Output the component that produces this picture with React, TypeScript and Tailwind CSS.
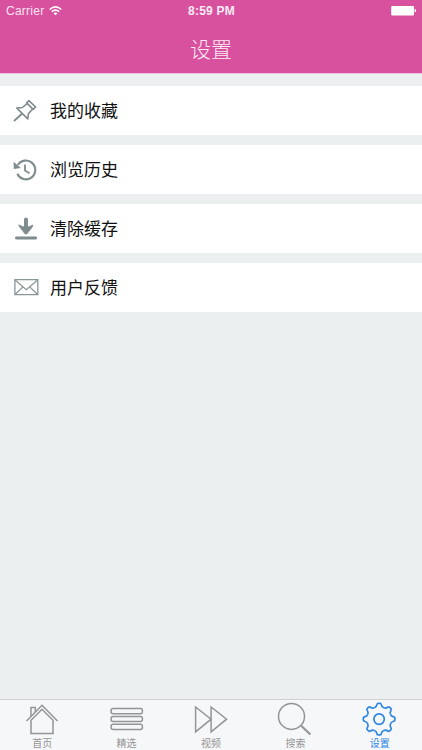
import type { ReactNode } from "react";

const TOOTH = "M-4.7 -11.4 C-3.1 -12.1 -2.6 -12.8 -2.4 -14 Q-2.1 -15.8 -1 -15.8 H1 Q2.1 -15.8 2.4 -14 C2.6 -12.8 3.1 -12.1 4.7 -11.4";

function PinIcon() {
  return (
    <svg width="26" height="26" viewBox="0 0 26 26" fill="none" stroke="#7f8c8d" strokeWidth="1.6" strokeLinejoin="round">
      <path d="M14.6 4.9 L16.9 2.6 L23.6 9 L21.2 11.4 Z" />
      <path d="M15.2 5.6 L10.4 9.5 L4.8 10.1 L15.8 20.9 L16.4 15.8 L20.6 11" />
      <path d="M10 15.7 L2 23" strokeWidth="1.9" />
    </svg>
  );
}

function HistoryIcon() {
  return (
    <svg width="26" height="26" viewBox="0 0 26 26" fill="none" stroke="#7f8c8d" strokeWidth="2.1">
      <path d="M5.9 8 A9.4 9.4 0 1 1 5.3 16.8" />
      <path d="M1.6 4.8 L1.8 11.9 L8.8 11 Z" fill="#7f8c8d" stroke="none" />
      <path d="M13 7.4 V13.4 L17.6 16.2" strokeWidth="1.8" />
    </svg>
  );
}

function DownloadIcon() {
  return (
    <svg width="26" height="26" viewBox="0 0 26 26" fill="none" stroke="#7f8c8d" strokeLinecap="round">
      <path d="M14 3.4 V14" strokeWidth="4" />
      <path d="M7.2 9 L11 10.8 H17 L20.8 9 L20.6 10.6 L14.8 18 H13.2 L7.4 10.6 Z" fill="#7f8c8d" strokeWidth="0.8" strokeLinejoin="round" />
      <path d="M4.4 22 H23.7" strokeWidth="2.8" />
    </svg>
  );
}

function MailIcon() {
  return (
    <svg width="27" height="26" viewBox="0 0 27 26" fill="none" stroke="#8b9697" strokeWidth="1.3">
      <path d="M2.9 4.7 H25.8 V19.7 H2.9 Z" />
      <path d="M3.1 4.9 L14.3 14.7 L25.6 4.9 M3.1 19.5 L10.9 11.9 M25.6 19.5 L17.7 11.9" />
    </svg>
  );
}

function HomeIcon() {
  return (
    <>
      <path d="M2.5 19 L18 3.2 L33.5 19" />
      <path d="M7 18.3 L18 7.2 L29 18.3 V31.4 H7 Z" />
      <path d="M7 14.4 V5.5 H11.3 V10" />
    </>
  );
}

function ListIcon() {
  return (
    <>
      <rect x="2.1" y="6.5" width="31.3" height="5.2" rx="2" />
      <rect x="2.1" y="14.4" width="31.3" height="5.2" rx="2" />
      <rect x="2.1" y="22.3" width="31.3" height="5.2" rx="2" />
    </>
  );
}

function ForwardIcon() {
  return <path d="M2.6 5 V29.8 L18.1 17.2 Z M18.1 5 V29.8 L33.6 17.2 Z" />;
}

function SearchIcon() {
  return (
    <>
      <circle cx="14.5" cy="14.4" r="13" />
      <path d="M24.2 23.8 L33.4 32.5" strokeWidth="2.2" />
    </>
  );
}

function GearIcon() {
  return (
    <g transform="translate(17.1 17.1)" strokeWidth="1.7">
      {[0, 45, 90, 135, 180, 225, 270, 315].map((angle) => (
        <path key={angle} d={TOOTH} transform={`rotate(${angle})`} />
      ))}
      <circle r="5.2" />
    </g>
  );
}

const rows: { label: string; icon: ReactNode }[] = [
  { label: "我的收藏", icon: <PinIcon /> },
  { label: "浏览历史", icon: <HistoryIcon /> },
  { label: "清除缓存", icon: <DownloadIcon /> },
  { label: "用户反馈", icon: <MailIcon /> },
];

const tabs: { label: string; icon: ReactNode; active?: boolean }[] = [
  { label: "首页", icon: <HomeIcon /> },
  { label: "精选", icon: <ListIcon /> },
  { label: "视频", icon: <ForwardIcon /> },
  { label: "搜索", icon: <SearchIcon /> },
  { label: "设置", icon: <GearIcon />, active: true },
];

function StatusBar() {
  return (
    <div className="grid h-[22px] grid-cols-3 items-center pl-[6px] pr-[5px] text-[12px] leading-none">
      <div className="flex items-center gap-[5px]">
        <span className="tracking-[0.25px] text-[#fbe3f1]">Carrier</span>
        <svg width="13" height="10" viewBox="0 0 13 10" fill="none" stroke="#fff" strokeWidth="1.6">
          <path d="M0.7 3.5 Q6.5 -1.7 12.3 3.5" />
          <path d="M2.8 5.7 Q6.5 2.4 10.2 5.7" />
          <path d="M4.5 7.2 Q6.5 5.6 8.5 7.2 L6.5 9.3 Z" fill="#fff" stroke="none" />
        </svg>
      </div>
      <span className="text-center font-bold tracking-[0.2px] text-[#fdebf5]">8:59 PM</span>
      <svg className="mb-[2px] justify-self-end" width="26" height="11" viewBox="0 0 26 11" fill="#fff">
        <rect x="0.2" y="0.9" width="22.8" height="9.6" rx="1.2" />
        <rect x="23.6" y="4.1" width="1.4" height="3.2" rx="0.7" />
      </svg>
    </div>
  );
}

export default function App() {
  return (
    <div className="flex h-[750px] w-[422px] flex-col overflow-hidden bg-[#ebeff0] font-['Liberation_Sans','Noto_Sans_CJK_SC',sans-serif]">
      <header className="h-[74px] shrink-0 border-b border-[#ecc3dc] bg-[#d8519f]">
        <StatusBar />
        <h1 className="mt-[12px] text-center text-[21px] font-light leading-[31px] text-[#fdeaf5]">设置</h1>
      </header>

      <main className="flex flex-1 flex-col gap-[10px] pt-[12px]">
        {rows.map((row) => (
          <div key={row.label} className="flex h-[49px] items-center bg-white pl-[12px] text-[17px] text-[#111]">
            <span className="w-[38px]">{row.icon}</span>
            <span className="pt-[2px]">{row.label}</span>
          </div>
        ))}
      </main>

      <nav className="grid h-[51px] shrink-0 grid-cols-5 border-t border-[#cfd2d3] bg-[#f6f7f9]">
        {tabs.map((tab) => (
          <div key={tab.label} className={`flex flex-col items-center pt-[2px] ${tab.active ? "text-[#2d86e0]" : "text-[#959596]"}`}>
            <svg width="36" height="34" viewBox="0 0 36 34" fill="none" stroke="currentColor" strokeWidth="1.5">
              {tab.icon}
            </svg>
            <span className="pt-px text-[10px] leading-[14px]">{tab.label}</span>
          </div>
        ))}
      </nav>
    </div>
  );
}
